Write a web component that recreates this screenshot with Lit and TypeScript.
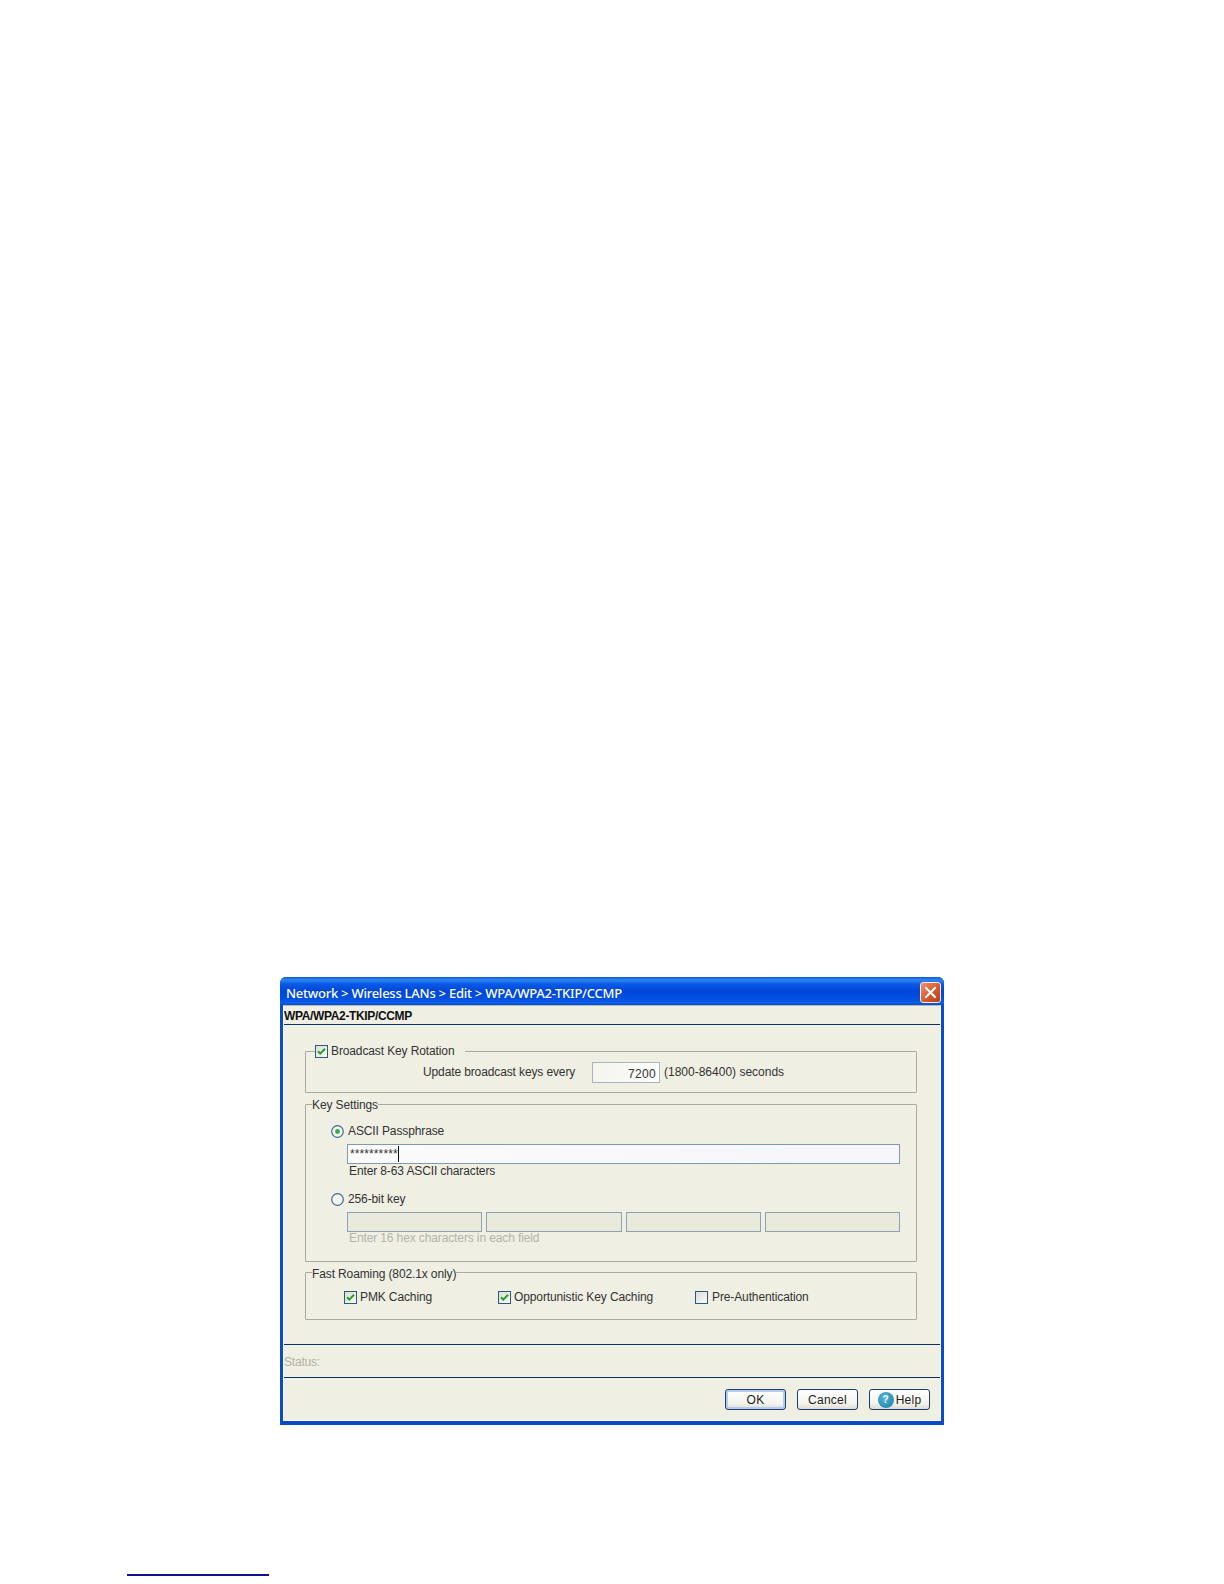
import { LitElement, html, css, svg } from "lit";
import { customElement } from "lit/decorators.js";

const check = (on: boolean) => html`<svg class="box" width="13" height="13" viewBox="0 0 13 13">
  <defs><linearGradient id="cb" x1="0" y1="0" x2="1" y2="1"><stop offset="0" stop-color="#dcdcd4"/><stop offset="1" stop-color="#fbfbf8"/></linearGradient></defs>
  <rect x=".5" y=".5" width="12" height="12" fill="url(#cb)" stroke="#2b5a80"/>
  ${on ? svg`<path d="M3 6.2 5.3 8.6 10 3.8" fill="none" stroke="#22a02c" stroke-width="2"/>` : ""}
</svg>`;

const radio = (on: boolean) => html`<svg class="box" width="13" height="13" viewBox="0 0 13 13">
  <circle cx="6.5" cy="6.5" r="5.8" fill="#f4f4ee" stroke="#3f6c96" stroke-width="1.2"/>
  ${on ? svg`<circle cx="6.5" cy="6.5" r="2.4" fill="#38ac48"/>` : ""}
</svg>`;

@customElement("app-root")
export class AppRoot extends LitElement {
  static styles = css`
    :host {
      display: block;
      height: 1584px;
      background: #fff;
      font-family: "Liberation Sans", Arial, sans-serif;
      font-size: 12px;
      color: #333;
      overflow: hidden;
    }
    .page { padding-top: 977px; }
    .win {
      width: 664px;
      height: 448px;
      margin-left: 280px;
      box-sizing: border-box;
      background: #0a4cc8;
      border-radius: 6px 6px 0 0;
      padding: 0 3px 4px;
      display: flex;
      flex-direction: column;
    }
    .title {
      height: 28px;
      margin: 0 -3px;
      padding: 0 3px 0 6px;
      border-radius: 6px 6px 0 0;
      background: linear-gradient(#0f5ad2 0, #2f86f0 3px, #0a5ae6 7px, #0046d8 14px, #0050e0 22px, #0a60ea 26px, #0a4cc8 28px);
      display: flex;
      align-items: center;
      justify-content: space-between;
      color: #fff;
      font-family: "Noto Sans", sans-serif;
      font-size: 13px;
      font-weight: 500;
      letter-spacing: -0.25px;
      box-sizing: border-box;
    }
    .title span { margin-top: 3px; }
    .close {
      width: 21px;
      height: 21px;
      box-sizing: border-box;
      border: 1px solid #f4ece8;
      border-radius: 3px;
      background: linear-gradient(135deg, #ec9070, #d65a30 55%, #b83c14);
      display: flex;
      align-items: center;
      justify-content: center;
      margin-top: 2px;
    }
    .body {
      flex: 1;
      background: #efefe3;
      border: 1px solid #fbfbf6;
      border-top-color: #b8b8b0;
      display: flex;
      flex-direction: column;
      min-height: 0;
    }
    .head {
      height: 18px;
      line-height: 20px;
      font-weight: 700;
      color: #111;
      border-bottom: 1px solid #0c2f68;
      letter-spacing: -0.35px;
    }
    .groups { padding: 20px 23px 0 21px; display: flex; flex-direction: column; }
    fieldset {
      margin: 0;
      padding: 0;
      min-width: 0;
      border: 1px solid #aaaa9e;
      border-radius: 1px;
    }
    legend {
      height: 13px;
      line-height: 13px;
      padding: 0;
      margin-left: 6px;
      display: flex;
      align-items: center;
      gap: 3px;
    }
    .g1 legend { margin-left: 9px; padding-right: 11px; }
    .g2 { margin-top: 5px; }
    .g2 legend { line-height: 15px; align-items: flex-start; }
    .g3 { margin-top: 4px; }
    .g3 legend { line-height: 17px; align-items: flex-start; }
    .box { flex: none; display: block; }
    .lbl { letter-spacing: -0.12px; white-space: nowrap; }
    .rot { display: flex; align-items: center; padding: 4px 0 9px 117px; height: 21px; }
    .rot .lbl { margin-bottom: 2px; }
    .rot .upd { width: 169px; }
    .rot .range { letter-spacing: 0; }
    .num {
      width: 68px;
      height: 21px;
      box-sizing: border-box;
      border: 1px solid #a9b4bc;
      background: linear-gradient(90deg, #f5f5ee, #fcfcfa);
      text-align: right;
      line-height: 22px;
      padding-right: 3px;
      margin-right: 4px;
      letter-spacing: 0.3px;
    }
    .g2body { padding: 13px 16px 16px 25px; }
    .opt { display: flex; align-items: center; gap: 4px; height: 14px; }
    .opt.second { margin-top: 14px; }
    .pad { padding-left: 16px; }
    .pass {
      margin-top: 6px;
      height: 20px;
      box-sizing: border-box;
      border: 1px solid #8099b0;
      background: linear-gradient(90deg, #fbfbfb, #f6f6fb);
      display: flex;
      align-items: center;
      padding-left: 2px;
      letter-spacing: 0.1px;
    }
    .caret { width: 1px; height: 16px; background: #111; }
    .note { padding-left: 2px; height: 14px; line-height: 14px; }
    .keys {
      margin-top: 6px;
      display: grid;
      grid-template-columns: repeat(4, 1fr);
      gap: 4px;
    }
    .key {
      height: 20px;
      box-sizing: border-box;
      border: 1px solid #8ea2b6;
      background: #eaeadc;
    }
    .hint { color: #b4b4aa; padding-left: 2px; height: 13px; line-height: 13px; }
    .g3row { display: flex; padding: 11px 0 15px 38px; height: 14px; }
    .chk { display: flex; align-items: center; gap: 3px; }
    .c1 { width: 154px; }
    .c2 { width: 197px; }
    .c3 { gap: 4px; }
    .status {
      margin-top: 24px;
      border-top: 1px solid #0c2f68;
      border-bottom: 1px solid #0c2f68;
      height: 32px;
      line-height: 34px;
      color: #b0b0a8;
      letter-spacing: -0.2px;
    }
    .foot {
      display: flex;
      justify-content: flex-end;
      gap: 11px;
      padding: 11px 10px 0 0;
    }
    .btn {
      width: 61px;
      height: 21px;
      box-sizing: border-box;
      border: 1px solid #1d3f6e;
      border-radius: 3px;
      background: linear-gradient(#fff, #f4f4ee 70%, #dcdcd0);
      display: flex;
      align-items: center;
      justify-content: center;
      gap: 2px;
      letter-spacing: 0.25px;
      color: #222;
    }
    .btn.ok { box-shadow: inset 0 0 0 2px #b4cdee; }
    .help {
      width: 16px;
      height: 16px;
      border-radius: 50%;
      background: radial-gradient(circle at 40% 35%, #52b4d8, #1c7ea8);
      color: #fff;
      font-weight: 700;
      font-size: 10px;
      line-height: 16px;
      text-align: center;
      letter-spacing: 0;
    }
    .rule { width: 142px; height: 2px; background: #10108c; margin: 149px 0 0 127px; }
  `;

  render() {
    return html`<div class="page">
        <div class="win">
          <div class="title">
            <span>Network &gt; Wireless LANs &gt; Edit &gt; WPA/WPA2-TKIP/CCMP</span>
            <div class="close">
              <svg width="13" height="13" viewBox="0 0 13 13"><path d="M2 2 11 11M11 2 2 11" stroke="#fff" stroke-width="2" stroke-linecap="square"/></svg>
            </div>
          </div>
          <div class="body">
            <div class="head">WPA/WPA2-TKIP/CCMP</div>
            <div class="groups">
              <fieldset class="g1">
                <legend>${check(true)}<span class="lbl">Broadcast Key Rotation</span></legend>
                <div class="rot">
                  <span class="lbl upd">Update broadcast keys every</span>
                  <div class="num">7200</div>
                  <span class="lbl range">(1800-86400) seconds</span>
                </div>
              </fieldset>
              <fieldset class="g2">
                <legend class="lbl">Key Settings</legend>
                <div class="g2body">
                  <div class="opt">${radio(true)}<span class="lbl">ASCII Passphrase</span></div>
                  <div class="pad">
                    <div class="pass"><span>**********</span><span class="caret"></span></div>
                    <div class="note lbl">Enter 8-63 ASCII characters</div>
                  </div>
                  <div class="opt second">${radio(false)}<span class="lbl">256-bit key</span></div>
                  <div class="pad">
                    <div class="keys">
                      <div class="key"></div><div class="key"></div><div class="key"></div><div class="key"></div>
                    </div>
                    <div class="hint lbl">Enter 16 hex characters in each field</div>
                  </div>
                </div>
              </fieldset>
              <fieldset class="g3">
                <legend class="lbl">Fast Roaming (802.1x only)</legend>
                <div class="g3row">
                  <div class="chk c1">${check(true)}<span class="lbl">PMK Caching</span></div>
                  <div class="chk c2">${check(true)}<span class="lbl">Opportunistic Key Caching</span></div>
                  <div class="chk c3">${check(false)}<span class="lbl">Pre-Authentication</span></div>
                </div>
              </fieldset>
            </div>
            <div class="status">Status:</div>
            <div class="foot">
              <div class="btn ok">OK</div>
              <div class="btn">Cancel</div>
              <div class="btn"><span class="help">?</span>Help</div>
            </div>
          </div>
        </div>
        <div class="rule"></div>
      </div>`;
  }
}
